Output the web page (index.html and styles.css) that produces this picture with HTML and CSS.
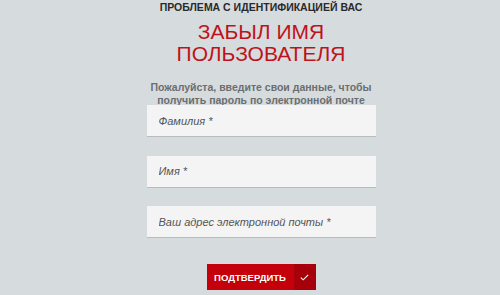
FILE: index.html
```html
<!DOCTYPE html>
<html lang="ru">
<head>
    <meta charset="UTF-8">
    <meta name="viewport" content="width=device-width, initial-scale=1.0">
    <title>Забыл имя пользователя</title>
    <link rel="stylesheet" href="styles.css">
</head>
<body>
  <div class="container">
    <div class="recover">
      <div class="eyebrow">Проблема с идентификацией вас</div>
      <h1 class="title">Забыл имя<br>пользователя</h1>
      <p class="hint">Пожалуйста, введите свои данные, чтобы получить пароль по электронной почте</p>
      <form class="form">
        <input class="field" type="text" placeholder="Фамилия *">
        <input class="field" type="text" placeholder="Имя *">
        <input class="field" type="email" placeholder="Ваш адрес электронной почты *">
        <button class="btn-submit" type="button">
          <span class="btn-label">Подтвердить</span>
          <span class="btn-icon">
            <svg width="9" height="7" viewBox="0 0 9 7"><path d="M0.8 3.6 L3.2 5.8 L8.2 0.8" fill="none" stroke="#ffffff" stroke-width="1.1"/></svg>
          </span>
        </button>
      </form>
    </div>
  </div>
</body>
</html>
```

FILE: styles.css
```css
body {
    margin: 0;
    font-family: 'Liberation Sans', Arial, sans-serif;
    background-color: #d6dbde;
    height: 295px;
    overflow: hidden;
}

.container {
    display: flex;
    justify-content: center;
    padding-left: 22px;
}

.recover {
    width: 240px;
    display: flex;
    flex-direction: column;
    align-items: center;
    text-align: center;
}

.eyebrow {
    margin-top: 1px;
    font-size: 10.5px;
    font-weight: bold;
    text-transform: uppercase;
    color: #2a2a2a;
    white-space: nowrap;
    line-height: 12px;
}

.title {
    margin: 8px 0 0;
    font-size: 21px;
    font-weight: normal;
    line-height: 22px;
    text-transform: uppercase;
    color: #c0121a;
}

.hint {
    margin: 16px 0 -2px;
    width: 240px;
    font-size: 10.5px;
    font-weight: bold;
    line-height: 13px;
    color: #6b6e70;
}

.form {
    display: flex;
    flex-direction: column;
    align-items: center;
}

.field {
    box-sizing: border-box;
    width: 229px;
    height: 32px;
    margin-bottom: 18.5px;
    padding: 0 12px;
    border: none;
    border-bottom: 1px solid #b8bcbf;
    background-color: #f4f4f4;
    font-family: 'Liberation Sans', Arial, sans-serif;
    font-size: 11px;
    font-style: italic;
}

.field::placeholder {
    color: #555555;
}

.btn-submit {
    display: flex;
    margin-top: 7.5px;
    padding: 0;
    height: 26px;
    border: none;
    background-color: #c4000b;
    cursor: pointer;
}

.btn-label {
    display: flex;
    align-items: center;
    width: 87px;
    justify-content: center;
    font-family: 'Liberation Sans', Arial, sans-serif;
    font-size: 9.5px;
    font-weight: bold;
    text-transform: uppercase;
    color: #ffffff;
}

.btn-icon {
    display: flex;
    align-items: center;
    justify-content: center;
    width: 22px;
    background-color: #a6000a;
}
```
